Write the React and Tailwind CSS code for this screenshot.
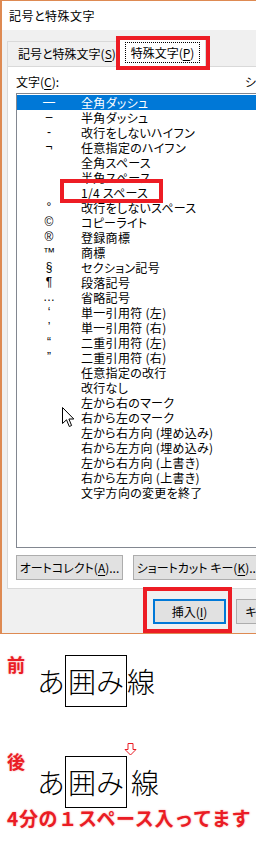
const rows = [
  ["—", "全角ダッシュ"],
  ["–", "半角ダッシュ"],
  ["-", "改行をしないハイフン"],
  ["¬", "任意指定のハイフン"],
  ["", "全角スペース"],
  ["", "半角スペース"],
  ["", "1/4 スペース"],
  ["°", "改行をしないスペース"],
  ["©", "コピーライト"],
  ["®", "登録商標"],
  ["™", "商標"],
  ["§", "セクション記号"],
  ["¶", "段落記号"],
  ["…", "省略記号"],
  ["‘", "単一引用符 (左)"],
  ["’", "単一引用符 (右)"],
  ["“", "二重引用符 (左)"],
  ["”", "二重引用符 (右)"],
  ["", "任意指定の改行"],
  ["", "改行なし"],
  ["", "左から右のマーク"],
  ["", "右から左のマーク"],
  ["", "左から右方向 (埋め込み)"],
  ["", "右から左方向 (埋め込み)"],
  ["", "左から右方向 (上書き)"],
  ["", "右から左方向 (上書き)"],
  ["", "文字方向の変更を終了"],
];

function U({ children }) {
  return <span className="underline underline-offset-2">{children}</span>;
}

export default function App() {
  return (
    <div className="relative w-[256px] h-[868px] overflow-hidden bg-white text-black font-['Noto_Sans_CJK_JP',sans-serif] [font-feature-settings:'palt']">
      {/* dialog */}
      <div className="w-[330px] h-[634px] border-l-2 border-t border-b border-[#de8a52] bg-[#f0f0f0] flex flex-col text-[12px]">
        <div className="h-[29px] shrink-0 bg-white flex items-center pl-[7px] text-[12px] tracking-[0.5px]">記号と特殊文字</div>
        <div className="pl-[5px] pt-[7px] flex flex-col">
          {/* tabs */}
          <div className="h-[29px] flex items-end">
            <div className="w-[112px] h-[25px] border-t border-l border-[#d9d9d9] bg-[#f0f0f0] pl-[10px] leading-[24px] whitespace-nowrap">
              記号と特殊文字(<U>S</U>)
            </div>
            <div className="relative z-10 w-[87px] h-[30px] -mb-px bg-white border-t border-l border-r border-[#d9d9d9] flex items-start justify-center pt-[4px]">
              <div className="border border-dotted border-black px-[5px] h-[21px] leading-[19px] whitespace-nowrap">
                特殊文字(<U>P</U>)
              </div>
            </div>
          </div>
          {/* panel */}
          <div className="h-[523px] border border-[#d9d9d9] bg-white pt-[7px] pl-[8px] flex flex-col">
            <div className="h-[15px] leading-[15px] flex whitespace-nowrap">
              <span className="w-[229px] shrink-0">文字(<U>C</U>):</span>
              <span>ショートカット キー:</span>
            </div>
            <div className="relative mt-[4px] h-[455px] border border-[#828790] pt-px overflow-hidden">
              {rows.map(([s, n], i) => (
                <div
                  key={i}
                  className={
                    "h-[15px] leading-[15px] flex whitespace-nowrap " +
                    (i === 0 ? "bg-[#0078d7] text-white" : "")
                  }
                >
                  <div className="w-[64px] text-center font-['Liberation_Sans','Noto_Sans_CJK_JP',sans-serif]">{s}</div>
                  <div className="tracking-[0.3px]">{n}</div>
                </div>
              ))}
              {/* mouse cursor */}
              <svg className="absolute left-[45px] top-[313px]" width="13" height="21" viewBox="0 0 13 21">
                <path d="M0.5 0.5 L0.5 16.5 L4.5 12.8 L7.3 19.5 L9.6 18.5 L6.9 12 L11.8 12 Z" fill="white" stroke="black" strokeWidth="1" strokeLinejoin="miter" />
              </svg>
            </div>
            <div className="mt-[7px] flex gap-[10px]">
              <div className="w-[107px] h-[25px] border border-[#adadad] bg-[#e1e1e1] flex items-center justify-center whitespace-nowrap">
                オートコレクト(<U>A</U>)...
              </div>
              <div className="w-[130px] h-[25px] border border-[#adadad] bg-[#e1e1e1] flex items-center justify-center whitespace-nowrap">
                ショートカット キー(<U>K</U>)...
              </div>
            </div>
          </div>
          {/* bottom buttons */}
          <div className="mt-[10px] flex gap-[10px] pl-[146px]">
            <div className="w-[73px] h-[25px] border-2 border-[#0078d7] bg-[#e1e1e1] flex items-center justify-center whitespace-nowrap">
              挿入(<U>I</U>)
            </div>
            <div className="w-[73px] h-[25px] border border-[#adadad] bg-[#e1e1e1] flex items-center justify-center whitespace-nowrap">
              キャンセル
            </div>
          </div>
        </div>
      </div>

      {/* sample area */}
      <div className="pl-[7px] [font-feature-settings:normal]">
        <div className="mt-[20px] flex items-start">
          <div className="w-[30px] text-[18px] leading-[20px] font-bold text-[#ea1c24] [text-shadow:0_0_2px_#f7a3a3]">前</div>
          <div className="mt-px h-[52px] flex items-center text-[28px] leading-[32px] font-light">
            <span>あ</span>
            <span className="h-[52px] w-[62px] border border-black flex items-center justify-center">囲み</span>
            <span>線</span>
          </div>
        </div>
        <div className="mt-[44px] flex items-start">
          <div className="w-[30px] text-[18px] leading-[20px] font-bold text-[#ea1c24] [text-shadow:0_0_2px_#f7a3a3]">後</div>
          <div className="mt-[5px] h-[52px] flex items-center text-[28px] leading-[32px] font-light">
            <span>あ</span>
            <span className="relative h-[52px] w-[62px] border border-black flex items-center justify-center">
              囲み
              <svg className="absolute left-[58px] top-[-14px]" width="13" height="13" viewBox="0 0 13 13">
                <path d="M4 0.5 H9 V6.5 H12 L6.5 12 L1 6.5 H4 Z" fill="white" stroke="#ea1c24" strokeWidth="1" />
              </svg>
            </span>
            <span className="ml-[4px]">線</span>
          </div>
        </div>
        <div className="text-[19px] leading-[19px] font-bold text-[#ea1c24] tracking-[0.7px] whitespace-nowrap [text-shadow:0_0_2px_#f7a3a3]">
          4分の１スペース入ってます
        </div>
      </div>

      {/* red annotation boxes */}
      <div className="absolute left-[116px] top-[36px] w-[94px] h-[34px] border-[4px] border-[#ed1c24] z-20" />
      <div className="absolute left-[60px] top-[179px] w-[103px] h-[24px] border-[4px] border-[#ed1c24] z-20" />
      <div className="absolute left-[143px] top-[587px] w-[89px] h-[46px] border-[4px] border-[#ed1c24] z-20" />
    </div>
  );
}
